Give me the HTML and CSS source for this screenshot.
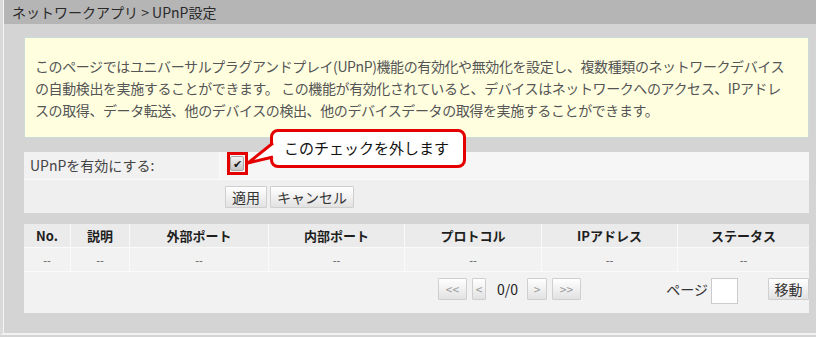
FILE: index.html
```html
<!DOCTYPE html>
<html lang="ja">
<head>
    <meta charset="UTF-8">
    <title>UPnP設定</title>
    <link rel="stylesheet" href="styles.css">
</head>
<body>
    <div class="frame">
        <div class="frame-inner">
            <div class="title-bar">ネットワークアプリ &gt; UPnP設定</div>

            <div class="content">
                <!-- 説明 -->
                <div class="notice">
                    このページではユニバーサルプラグアンドプレイ(UPnP)機能の有効化や無効化を設定し、複数種類のネットワークデバイス<br>
                    の自動検出を実施することができます。 この機能が有効化されていると、デバイスはネットワークへのアクセス、IPアドレ<br>
                    スの取得、データ転送、他のデバイスの検出、他のデバイスデータの取得を実施することができます。
                </div>

                <!-- 設定 -->
                <div class="form-table">
                    <div class="form-row">
                        <div class="form-label">UPnPを有効にする:</div>
                        <div class="form-value">
                            <span class="checkbox checked">✔</span>
                        </div>
                    </div>
                    <div class="form-actions">
                        <button class="btn">適用</button>
                        <button class="btn">キャンセル</button>
                    </div>

                    <!-- 注釈 -->
                    <div class="mark-box"></div>
                    <div class="callout">このチェックを外します</div>
                    <svg class="callout-tail" width="32" height="30" viewBox="0 0 32 30">
                        <polygon points="31,4 4,25 31,20" fill="#fff"/>
                        <polyline points="29,5 4,25 29,19" fill="none" stroke="#e50000" stroke-width="3" stroke-linejoin="round"/>
                    </svg>
                </div>

                <!-- 一覧 -->
                <div class="list-panel">
                    <table class="list-table">
                        <thead>
                            <tr>
                                <th class="col-no">No.</th>
                                <th class="col-desc">説明</th>
                                <th class="col-ext">外部ポート</th>
                                <th class="col-int">内部ポート</th>
                                <th class="col-proto">プロトコル</th>
                                <th class="col-ip">IPアドレス</th>
                                <th>ステータス</th>
                            </tr>
                        </thead>
                        <tbody>
                            <tr>
                                <td>--</td>
                                <td>--</td>
                                <td>--</td>
                                <td>--</td>
                                <td>--</td>
                                <td>--</td>
                                <td>--</td>
                            </tr>
                        </tbody>
                    </table>

                    <div class="list-footer">
                        <div class="pager">
                            <button class="btn pg-btn wide">&lt;&lt;</button>
                            <button class="btn pg-btn narrow">&lt;</button>
                            <span class="pg-count">0/0</span>
                            <button class="btn pg-btn mid">&gt;</button>
                            <button class="btn pg-btn wide">&gt;&gt;</button>
                        </div>
                        <div class="page-jump">
                            <span class="page-label">ページ</span>
                            <input type="text" class="page-input">
                            <button class="btn go-btn">移動</button>
                        </div>
                    </div>
                </div>
            </div>
        </div>
    </div>
</body>
</html>
```

FILE: styles.css
```css
html, body {
    margin: 0;
    padding: 0;
}

body {
    font-family: "Noto Sans CJK JP", "Liberation Sans", sans-serif;
    background-color: #d4d4d4;
    color: #333;
    width: 816px;
    height: 337px;
    overflow: hidden;
}

.frame {
    border-left: 3px solid #dadada;
    border-bottom: 2px solid #f2f2f2;
    height: 335px;
    box-sizing: border-box;
}

.frame-inner {
    border-left: 1px solid #f4f4f4;
    height: 100%;
}

.title-bar {
    height: 24px;
    line-height: 24px;
    background-color: #b5b5b5;
    padding-left: 8px;
    font-size: 14px;
    color: #2a2a2a;
}

.content {
    padding: 13px 7px 0 20px;
}

.notice {
    background-color: #ffffe0;
    border: 1px solid #cddada;
    height: 101px;
    box-sizing: border-box;
    padding: 17px 8px 0 10px;
    font-size: 14px;
    line-height: 22px;
    color: #555;
    white-space: nowrap;
    letter-spacing: -0.4px;
}

.form-table {
    position: relative;
    margin-top: 14px;
}

.form-row {
    display: grid;
    grid-template-columns: 196px 1fr;
    height: 27px;
    border-bottom: 1px solid #fafafa;
}

.form-label {
    background-color: #f1f1f1;
    border-right: 1px solid #fafafa;
    padding-left: 6px;
    font-size: 14px;
    line-height: 27px;
    color: #444;
}

.form-value {
    background-color: #f6f6f6;
    display: flex;
    align-items: flex-start;
    padding: 4px 0 0 10px;
}

.checkbox {
    width: 12px;
    height: 13px;
    border: 1px solid #a8a8a8;
    border-radius: 2px;
    background: linear-gradient(#f4f4f4, #c4c4c4);
    font-size: 11px;
    line-height: 13px;
    text-align: center;
    color: #1a1a1a;
}

.form-actions {
    background-color: #efefef;
    height: 33px;
    box-sizing: border-box;
    padding: 6px 0 0 201px;
    display: flex;
    align-items: flex-start;
    gap: 3px;
}

.btn {
    font-family: inherit;
    font-size: 14px;
    color: #333;
    height: 22px;
    padding: 0 6px;
    line-height: 20px;
    border: 1px solid #cfcfcf;
    border-radius: 1px;
    background: linear-gradient(#ffffff, #e2e2e2);
    cursor: pointer;
}

.mark-box {
    position: absolute;
    left: 203px;
    top: 0;
    width: 21px;
    height: 23px;
    box-sizing: border-box;
    border: 3px solid #e50000;
}

.callout {
    position: absolute;
    left: 246px;
    top: -23px;
    width: 196px;
    height: 39px;
    box-sizing: border-box;
    border: 3px solid #e50000;
    border-radius: 8px;
    background-color: #fff;
    padding-left: 11px;
    font-size: 15px;
    line-height: 32px;
    color: #111;
}

.callout-tail {
    position: absolute;
    left: 220px;
    top: -14px;
}

.list-panel {
    margin-top: 11px;
    background-color: #f2f2f2;
    height: 89px;
}

.list-table {
    width: 100%;
    border-collapse: collapse;
    table-layout: fixed;
}

.list-table th,
.list-table td {
    border: 1px solid #fafafa;
    text-align: center;
    padding: 0;
}

.list-table tr > :first-child {
    border-left: none;
}

.list-table tr > :last-child {
    border-right: none;
}

.list-table th {
    background-color: #ebebeb;
    height: 23px;
    font-size: 13px;
    font-weight: bold;
    color: #1e1e1e;
    border-top: none;
}

.list-table td {
    background-color: #f2f2f2;
    height: 23px;
    font-size: 11px;
    color: #555;
}

.col-no { width: 46px; }
.col-desc { width: 58px; }
.col-ext { width: 138px; }
.col-int { width: 135px; }
.col-proto { width: 136px; }
.col-ip { width: 135px; }

.list-footer {
    display: flex;
    align-items: flex-start;
    padding-top: 6px;
}

.pager {
    display: flex;
    align-items: center;
    margin-left: 414px;
    gap: 5px;
}

.pg-btn {
    color: #9a9a9a;
    font-size: 12px;
    padding: 0;
    text-align: center;
}

.pg-btn.wide { width: 29px; }
.pg-btn.narrow { width: 14px; }
.pg-btn.mid { width: 20px; }

.pg-count {
    font-size: 14px;
    color: #222;
    padding: 0 4px 0 6px;
}

.page-jump {
    margin-left: auto;
    display: flex;
    align-items: flex-start;
}

.page-label {
    font-size: 14px;
    line-height: 22px;
    color: #333;
    margin-right: 3px;
}

.page-input {
    width: 27px;
    height: 26px;
    box-sizing: border-box;
    border: 1px solid #cbcbcb;
    background-color: #fff;
    padding: 0;
}

.go-btn {
    margin-left: 30px;
    width: 41px;
    padding: 0;
}
```
